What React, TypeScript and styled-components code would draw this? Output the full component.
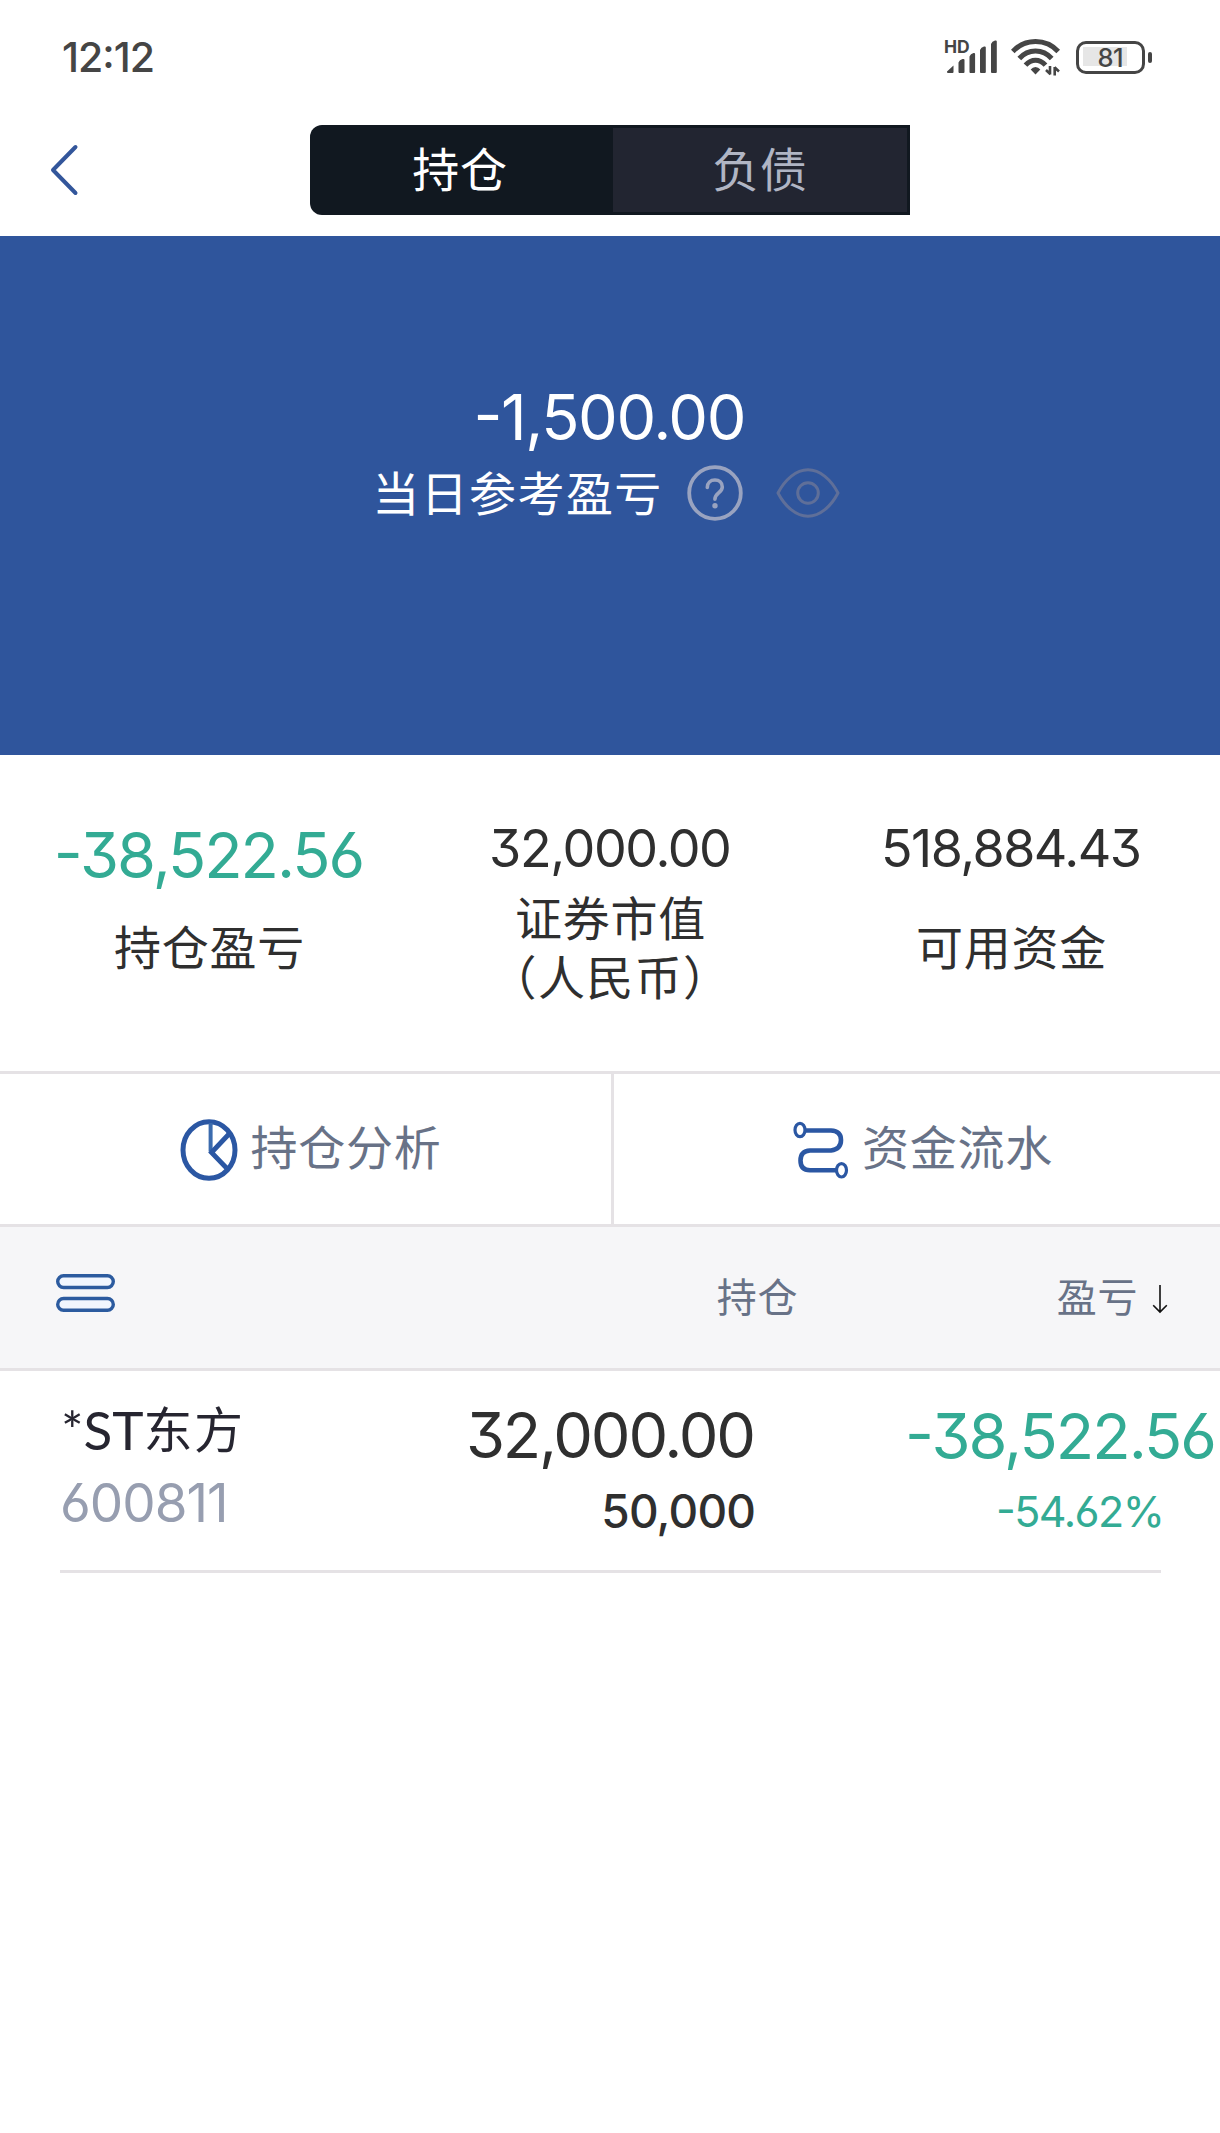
import React from "react";
import styled, { createGlobalStyle } from "styled-components";

const LATIN = `Inter, "Noto Sans CJK SC", sans-serif`;
const HAN = `"Noto Sans CJK SC", sans-serif`;

const color = {
  brand: "#2f559c",
  icon: "#2b57a3",
  ink: "#2f2f2f",
  slate: "#687287",
  muted: "#979eb0",
  green: "#33ab94",
  line: "#e5e2e5",
  status: "#454545",
};

const GlobalStyle = createGlobalStyle`
  *, *::before, *::after { box-sizing: border-box; }
  body { margin: 0; background: #fff; }
`;

const Screen = styled.main`
  display: flex;
  flex-direction: column;
  width: 1220px;
  min-height: 2133px;
  overflow: hidden;
  background: #fff;
  color: ${color.ink};
  font-family: ${LATIN};
`;

/* Digits, centred on their line */
const Figure = styled.span<{ $size: number; $track?: number; $weight?: number; $tone?: string }>`
  display: block;
  font-family: ${LATIN};
  font-size: ${(p) => p.$size}px;
  font-weight: ${(p) => p.$weight ?? 400};
  font-feature-settings: "cv09", "cv03", "case";
  letter-spacing: ${(p) => p.$track ?? 0}px;
  margin-right: ${(p) => -(p.$track ?? 0)}px;
  padding-top: 2px;
  line-height: 1.2;
  white-space: nowrap;
  color: ${(p) => p.$tone ?? "inherit"};
`;

/* Chinese label; the bottom padding centres the glyphs in their box */
const Label = styled.span<{ $size?: number; $tone?: string; $track?: number }>`
  display: block;
  font-family: ${HAN};
  font-size: ${(p) => p.$size ?? 47}px;
  letter-spacing: ${(p) => p.$track ?? 0.015}em;
  line-height: 1;
  padding-bottom: 0.11em;
  white-space: nowrap;
  color: ${(p) => p.$tone ?? "inherit"};
`;

const StatusBar = styled.header`
  display: flex;
  align-items: center;
  justify-content: space-between;
  height: 114px;
  padding: 0 68px 0 62px;
  color: ${color.status};
`;

const StatusIcons = styled.div`
  display: flex;
  align-items: center;
  gap: 13px;
`;

const Battery = styled.div`
  display: flex;
  align-items: center;
  gap: 3px;
  margin-left: 2px;
`;

const BatteryBody = styled.div`
  display: flex;
  align-items: center;
  justify-content: center;
  width: 69px;
  height: 33px;
  border: 3.5px solid ${color.status};
  border-radius: 10px;
  background: linear-gradient(#e6e6e6, #e6e6e6) 4px 3.5px / 44px 19px no-repeat;
`;

const BatteryTip = styled.div`
  width: 4px;
  height: 11px;
  border-radius: 2px;
  background: ${color.status};
`;

const NavBar = styled.nav`
  display: flex;
  height: 122px;
  padding-top: 11px;
`;

const BackButton = styled.button`
  width: 310px;
  height: 90px;
  padding: 0 0 0 50px;
  border: 0;
  background: none;
  display: flex;
  align-items: center;
`;

const Tabs = styled.div`
  display: flex;
  width: 600px;
  height: 90px;
  padding: 3px 3px 3px 0;
  border-radius: 12px 0 0 12px;
  background: #111820;
`;

const Tab = styled.div<{ $active?: boolean }>`
  display: flex;
  align-items: center;
  justify-content: center;
  width: ${(p) => (p.$active ? "303px" : "294px")};
  padding: ${(p) => (p.$active ? "0 3px 2px 0" : "0 0 2px")};
  background: ${(p) => (p.$active ? "transparent" : "#222531")};
  color: ${(p) => (p.$active ? "#fff" : "#b0b5c4")};
`;

const Hero = styled.section`
  display: flex;
  flex-direction: column;
  align-items: center;
  height: 519px;
  padding-top: 142px;
  background: ${color.brand};
  color: #fff;
`;

const HeroCaption = styled.div`
  display: flex;
  align-items: center;
  height: 60px;
  margin-top: 7px;
  padding-right: 8px;

  svg:first-of-type { margin-left: 24px; }
  svg:last-of-type { margin-left: 33px; }
`;

const Stats = styled.section`
  display: grid;
  grid-template-columns: repeat(3, 401px);
  height: 316px;
  padding: 56px 8px 0 9px;
`;

const Stat = styled.div`
  display: flex;
  flex-direction: column;
  align-items: center;
`;

const StatValue = styled.div<{ $drop?: boolean }>`
  display: flex;
  align-items: center;
  height: 75px;
  padding-top: ${(p) => (p.$drop ? "12px" : "0")};
`;

const StatCaption = styled.div`
  display: flex;
  flex-direction: column;
  align-items: center;
  justify-content: center;
  gap: 6px;
  height: 117px;
  margin-top: 3px;
`;

const Bracketed = styled(Label)`
  font-feature-settings: "halt";
  letter-spacing: 1.4px;
`;

const Actions = styled.section`
  display: flex;
  height: 156px;
  border-top: 3px solid ${color.line};
  border-bottom: 3px solid ${color.line};
`;

const Action = styled.div`
  display: flex;
  align-items: center;
  justify-content: center;
  gap: 13px;
  padding-left: 12px;
  width: 606px;

  svg { margin-top: 2px; }
  span { margin-bottom: 3px; }

  &:first-child {
    width: 614px;
    padding-left: 10px;
    border-right: 3px solid ${color.line};
  }
`;

const TableHead = styled.div`
  display: grid;
  grid-template-columns: 341px 400px 1fr;
  align-items: center;
  justify-items: end;
  height: 144px;
  padding: 0 52px 0 57px;
  background: #f6f6f8;
  border-bottom: 3px solid ${color.line};
  color: ${color.slate};

  > :first-child {
    justify-self: start;
    margin: 0 0 9px -1px;
  }
`;

const SortHead = styled.div`
  display: flex;
  align-items: center;
  gap: 14px;

  svg { margin-top: 3px; }
`;

const HoldingRow = styled.div`
  display: grid;
  grid-template-columns: 300px 396px 1fr;
  height: 202px;
  margin: 0 59px 0 60px;
  border-bottom: 3px solid ${color.line};
`;

const Holding = styled.div`
  padding-top: 21px;
`;

const HoldingName = styled.div`
  display: flex;
  align-items: center;
  height: 76px;
  padding: 0 0 1px 1px;
  color: #262530;
`;

const Ticker = styled.span`
  font-family: Lato, sans-serif;
  font-size: 53px;
  line-height: 1;
`;

const Code = styled.div`
  display: flex;
  align-items: center;
  height: 70px;
`;

const Amounts = styled.div<{ $top: number }>`
  display: flex;
  flex-direction: column;
  align-items: flex-end;
  padding-top: ${(p) => p.$top}px;
`;

const AmountLine = styled.div<{ $bleed?: number }>`
  display: flex;
  align-items: center;
  height: 75.5px;
  margin-right: ${(p) => -(p.$bleed ?? 0)}px;
`;

const SignalIcon = () => (
  <svg width="54" height="36" viewBox="0 0 54 36" fill={color.status}>
    <text x="0" y="14" fontFamily="Inter, sans-serif" fontSize="17.500" fontWeight="700">HD</text>
    <path d="M3 32.5L9.500 26.5V33q0 1-1 1H4q-1 0-1-1zM14.5 23.5q1-3 4-3.500h1q1 0 1 1V33q0 1-1 1h-4q-1 0-1-1zM25.500 17.500q1-3 4-3.500h.6q1 0 1 1V33q0 1-1 1h-3.600q-1 0-1-1zM36 11q1-3 4-3.500h.8q1 0 1 1V33q0 1-1 1H37q-1 0-1-1zM47 5q1-3 4-3.500h.8q1 0 1 1V33q0 1-1 1H48q-1 0-1-1z" />
  </svg>
);

const WifiIcon = () => (
  <svg width="50" height="38" viewBox="0 0 50 38" fill="none" stroke={color.status}>
    <path d="M1.800 13.500Q11 3.500 24.500 3.500T47.200 13.500" strokeWidth="5" />
    <path d="M8.300 20.500Q15 13 24.500 13T40.700 20.500" strokeWidth="5" />
    <path d="M14.500 27.200Q19 22.200 24.500 22.200T34.500 27.200" strokeWidth="5" />
    <path d="M24.500 36.500l-4.800-5q2-2.600 4.800-2.600t4.800 2.600z" fill={color.status} stroke="none" />
    <path d="M39 28v8.500M39.500 36.300l-4.500-4.300M43.700 37.500V29M43.500 29.300l4.500 4.200" strokeWidth="2.600" />
  </svg>
);

const BackIcon = () => (
  <svg width="30" height="52" viewBox="0 0 30 52" fill="none" stroke="#33569b" strokeWidth="4" strokeLinecap="round" strokeLinejoin="round">
    <path d="M25.500 3L3 26l22.500 23" />
  </svg>
);

const HelpIcon = () => (
  <svg width="56" height="56" viewBox="0 0 56 56" fill="none" stroke="#99a3c0">
    <circle cx="28" cy="28" r="25.800" strokeWidth="3.800" />
    <path d="M20.300 22.500c0-4.800 3.300-7.500 7.600-7.500s7.400 2.800 7.400 7c0 5.800-7.400 6.200-7.400 12.200" strokeWidth="3.600" strokeLinecap="round" />
    <circle cx="28" cy="40.800" r="2.700" fill="#99a3c0" stroke="none" />
  </svg>
);

const EyeIcon = () => (
  <svg width="64" height="50" viewBox="0 0 64 50" fill="none" stroke="#5f6f99" strokeWidth="3">
    <path d="M2 25C9 11.500 20 1.800 32 1.800S55 11.500 62 25C55 38.500 44 48.200 32 48.200S9 38.500 2 25z" strokeLinejoin="round" />
    <circle cx="32" cy="25" r="10.300" />
  </svg>
);

const PieIcon = () => (
  <svg width="58" height="62" viewBox="0 0 58 62" fill="none" stroke={color.icon}>
    <ellipse cx="29" cy="31" rx="26" ry="28.300" strokeWidth="5" />
    <path d="M30.600 4V32.500" strokeWidth="4" stroke="#3b6bae" />
    <path d="M49 15L31.500 33.500L46.500 49" strokeWidth="4.800" />
  </svg>
);

const FlowIcon = () => (
  <svg width="56" height="58" viewBox="0 0 56 58" fill="none" stroke={color.icon}>
    <path d="M13 9.500H38Q48 10 48 19T38 29.500H17Q7.500 30 7.500 39.500T17 49.300H43" strokeWidth="4.600" />
    <ellipse cx="7" cy="9" rx="5" ry="6.700" strokeWidth="3.200" fill="#fff" />
    <ellipse cx="48.500" cy="49.300" rx="5" ry="6.700" strokeWidth="3.200" fill="#fff" />
  </svg>
);

const MenuIcon = () => (
  <svg width="59" height="38" viewBox="0 0 59 38" fill="#f1f6fe" stroke="#2c5b9f" strokeWidth="3.400">
    <rect x="1.700" y="1.700" width="55.600" height="11.800" rx="5.900" />
    <rect x="1.700" y="24.500" width="55.600" height="11.800" rx="5.900" />
  </svg>
);

const SortIcon = () => (
  <svg width="16" height="30" viewBox="0 0 16 30" fill="none" stroke="#111" strokeWidth="1.600">
    <path d="M8 1v27M1.200 21.200L8 28l6.800-6.800" />
  </svg>
);

export default function App() {
  return (
    <Screen>
      <GlobalStyle />
      <StatusBar>
        <Figure $size={41} $track={-1} $weight={500}>12:12</Figure>
        <StatusIcons>
          <SignalIcon />
          <WifiIcon />
          <Battery>
            <BatteryBody>
              <Figure $size={25.500} $weight={500} $track={-0.500}>81</Figure>
            </BatteryBody>
            <BatteryTip />
          </Battery>
        </StatusIcons>
      </StatusBar>

      <NavBar>
        <BackButton aria-label="返回"><BackIcon /></BackButton>
        <Tabs>
          <Tab $active><Label>持仓</Label></Tab>
          <Tab><Label>负债</Label></Tab>
        </Tabs>
      </NavBar>

      <Hero>
        <Figure $size={63} $track={-1.400}>-1,500.00</Figure>
        <HeroCaption>
          <Label $track={0.03}>当日参考盈亏</Label>
          <HelpIcon />
          <EyeIcon />
        </HeroCaption>
      </Hero>

      <Stats>
        <Stat>
          <StatValue $drop><Figure $size={63} $track={-2} $tone={color.green}>-38,522.56</Figure></StatValue>
          <StatCaption><Label>持仓盈亏</Label></StatCaption>
        </Stat>
        <Stat>
          <StatValue><Figure $size={52} $track={-1.400}>32,000.00</Figure></StatValue>
          <StatCaption>
            <Label>证券市值</Label>
            <Bracketed>（人民币）</Bracketed>
          </StatCaption>
        </Stat>
        <Stat>
          <StatValue><Figure $size={52} $track={-1.500}>518,884.43</Figure></StatValue>
          <StatCaption><Label>可用资金</Label></StatCaption>
        </Stat>
      </Stats>

      <Actions>
        <Action><PieIcon /><Label $tone={color.slate}>持仓分析</Label></Action>
        <Action><FlowIcon /><Label $tone={color.slate}>资金流水</Label></Action>
      </Actions>

      <TableHead>
        <MenuIcon />
        <Label $size={40}>持仓</Label>
        <SortHead><Label $size={40}>盈亏</Label><SortIcon /></SortHead>
      </TableHead>

      <HoldingRow>
        <Holding>
          <HoldingName><Ticker>*ST</Ticker><Label $size={49} $track={0.03}>东方</Label></HoldingName>
          <Code><Figure $size={53} $track={-1} $tone={color.muted}>600811</Figure></Code>
        </Holding>
        <Amounts $top={26}>
          <AmountLine><Figure $size={63} $track={-2.200}>32,000.00</Figure></AmountLine>
          <AmountLine><Figure $size={46} $track={-0.800} $weight={500}>50,000</Figure></AmountLine>
        </Amounts>
        <Amounts $top={27}>
          <AmountLine $bleed={56}><Figure $size={63} $track={-1.950} $tone={color.green}>-38,522.56</Figure></AmountLine>
          <AmountLine $bleed={4}><Figure $size={43} $track={-1.500} $tone={color.green}>-54.62%</Figure></AmountLine>
        </Amounts>
      </HoldingRow>
    </Screen>
  );
}
